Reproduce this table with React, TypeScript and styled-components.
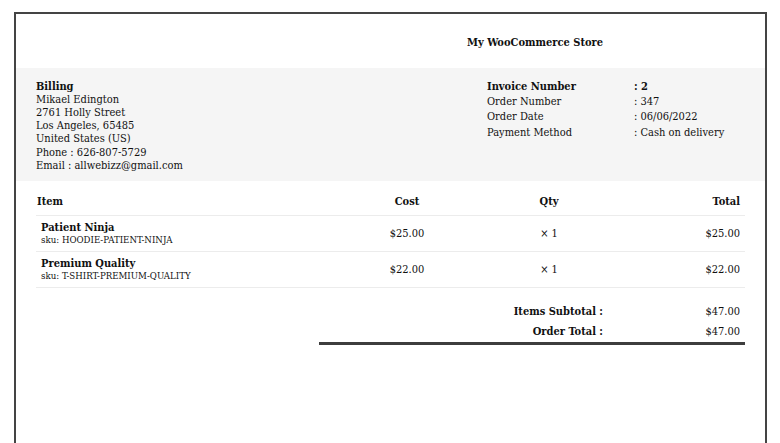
import React from "react";
import styled, { createGlobalStyle } from "styled-components";

const Global = createGlobalStyle`
  html, body { margin: 0; padding: 0; background: #fff; }
  body { font-family: "DejaVu Serif Condensed", "DejaVu Serif", serif; color: #111; }
`;

const Page = styled.div`
  padding: 12px 13px 0 14px;
`;

const Sheet = styled.div`
  border: 2px solid #444;
  min-height: 520px;
  background: #fff;
`;

const Header = styled.div`
  box-sizing: border-box;
  height: 54px;
  display: flex;
  align-items: center;
  padding: 2px 0 0 451px;
  font-size: 11px;
  font-weight: bold;
`;

const Info = styled.div`
  background: #f5f5f5;
  display: grid;
  grid-template-columns: 451px 1fr;
  padding: 11.5px 20px 9.5px 20px;
  font-size: 11px;
  line-height: 13.2px;
`;

const Address = styled.div`
  display: flex;
  flex-direction: column;
`;

const Strong = styled.span`
  font-weight: bold;
`;

const Meta = styled.div`
  display: grid;
  grid-template-columns: 147px 1fr;
  row-gap: 2.2px;
  align-content: start;
`;

const MetaCell = styled.div<{ $bold?: boolean }>`
  font-weight: ${(p) => (p.$bold ? "bold" : "normal")};
`;

const Body = styled.div`
  padding: 14px 20px 0 20px;
  font-size: 11px;
  line-height: 13px;
`;

const Row = styled.div<{ $head?: boolean }>`
  display: grid;
  grid-template-columns: 320px 102px 182px 105px;
  align-items: center;
  border-bottom: 1px solid #ececec;
  padding: ${(p) => (p.$head ? "0 0 7px 0" : "5px 0 5px 0")};
  font-weight: ${(p) => (p.$head ? "bold" : "normal")};
`;

const Cell = styled.div<{ $align?: "left" | "center" | "right"; $pad?: string }>`
  text-align: ${(p) => p.$align || "left"};
  padding: ${(p) => p.$pad || "0 5px"};
`;

const Name = styled.div`
  font-weight: bold;
`;

const Sku = styled.div`
  font-size: 9.6px;
  line-height: 12px;
`;

const Totals = styled.div`
  margin: 14px 0 0 283px;
  display: grid;
  grid-template-columns: 289px 1fr;
  border-bottom: 3px solid #3d3d3d;
`;

const TotalLabel = styled.div`
  font-weight: bold;
  text-align: right;
  padding: 0 5px;
  line-height: 20px;
`;

const TotalValue = styled.div`
  text-align: right;
  padding: 0 5px;
  line-height: 20px;
`;

const items = [
  { name: "Patient Ninja", sku: "HOODIE-PATIENT-NINJA", cost: "$25.00", qty: "× 1", total: "$25.00" },
  { name: "Premium Quality", sku: "T-SHIRT-PREMIUM-QUALITY", cost: "$22.00", qty: "× 1", total: "$22.00" },
];

export default function App() {
  return (
    <>
      <Global />
      <Page>
        <Sheet>
          <Header>My WooCommerce Store</Header>
          <Info>
            <Address>
              <Strong>Billing</Strong>
              <span>Mikael Edington</span>
              <span>2761 Holly Street</span>
              <span>Los Angeles, 65485</span>
              <span>United States (US)</span>
              <span>Phone : 626-807-5729</span>
              <span>Email : allwebizz@gmail.com</span>
            </Address>
            <Meta>
              <MetaCell $bold>Invoice Number</MetaCell>
              <MetaCell $bold>: 2</MetaCell>
              <MetaCell>Order Number</MetaCell>
              <MetaCell>: 347</MetaCell>
              <MetaCell>Order Date</MetaCell>
              <MetaCell>: 06/06/2022</MetaCell>
              <MetaCell>Payment Method</MetaCell>
              <MetaCell>: Cash on delivery</MetaCell>
            </Meta>
          </Info>
          <Body>
            <Row $head>
              <Cell $pad="0 1px">Item</Cell>
              <Cell $align="center">Cost</Cell>
              <Cell $align="center">Qty</Cell>
              <Cell $align="right">Total</Cell>
            </Row>
            {items.map((it) => (
              <Row key={it.sku}>
                <Cell>
                  <Name>{it.name}</Name>
                  <Sku>sku: {it.sku}</Sku>
                </Cell>
                <Cell $align="center">{it.cost}</Cell>
                <Cell $align="center">{it.qty}</Cell>
                <Cell $align="right">{it.total}</Cell>
              </Row>
            ))}
            <Totals>
              <TotalLabel>Items Subtotal :</TotalLabel>
              <TotalValue>$47.00</TotalValue>
              <TotalLabel>Order Total :</TotalLabel>
              <TotalValue>$47.00</TotalValue>
            </Totals>
          </Body>
        </Sheet>
      </Page>
    </>
  );
}
